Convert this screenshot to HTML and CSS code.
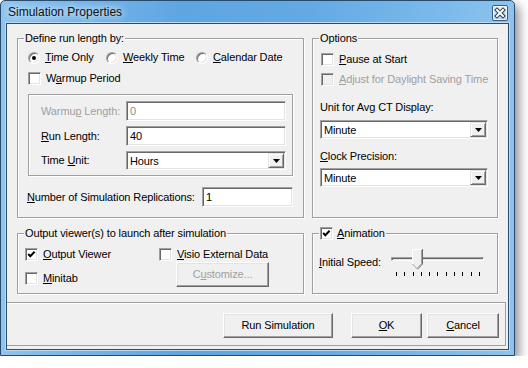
FILE: index.html
```html
<!DOCTYPE html>
<html>
<head>
<meta charset="utf-8">
<title>Simulation Properties</title>
<link rel="stylesheet" href="styles.css">
</head>
<body>
<div class="window">
  <div class="titlebar">
    <span class="title">Simulation Properties</span>
    <span class="close">
      <svg width="14" height="14" viewBox="0 0 14 14"><path d="M4 4 L10 10 M10 4 L4 10" stroke="#2b3f55" stroke-width="4" stroke-linecap="square"/><path d="M4 4 L10 10 M10 4 L4 10" stroke="#fff" stroke-width="2" stroke-linecap="square"/></svg>
    </span>
  </div>
  <div class="client">
    <div class="groups">
      <div class="group g-define">
        <span class="legend">Define run length by:</span>
        <div class="radios">
          <label class="opt"><span class="radio on"></span><span><u>T</u>ime Only</span></label>
          <label class="opt"><span class="radio"></span><span><u>W</u>eekly Time</span></label>
          <label class="opt"><span class="radio"></span><span><u>C</u>alendar Date</span></label>
        </div>
        <label class="opt warm"><span class="cb"></span><span>W<u>a</u>rmup Period</span></label>
        <div class="inner">
          <div class="field"><span class="lbl disabled">Warmu<u>p</u> Length:</span><span class="input dim">0</span></div>
          <div class="field"><span class="lbl"><u>R</u>un Length:</span><span class="input">40</span></div>
          <div class="field"><span class="lbl">Time <u>U</u>nit:</span><span class="select wide"><span class="val">Hours</span><span class="drop"><svg width="7" height="4" viewBox="0 0 7 4"><path d="M0 0H7L3.5 4Z" fill="#000"/></svg></span></span></div>
        </div>
        <div class="reps"><span class="lbl-reps"><u>N</u>umber of Simulation Replications:</span><span class="input small">1</span></div>
      </div>

      <div class="group g-options">
        <span class="legend">Options</span>
        <label class="opt pause"><span class="cb"></span><span><u>P</u>ause at Start</span></label>
        <label class="opt adjust disabled"><span class="cb off"></span><span><u>A</u>djust for Daylight Saving Time</span></label>
        <div class="olabel first">Unit for Avg CT Display:</div>
        <span class="select opt-sel"><span class="val">Minute</span><span class="drop"><svg width="7" height="4" viewBox="0 0 7 4"><path d="M0 0H7L3.5 4Z" fill="#000"/></svg></span></span>
        <div class="olabel second"><u>C</u>lock Precision:</div>
        <span class="select opt-sel sel2"><span class="val">Minute</span><span class="drop"><svg width="7" height="4" viewBox="0 0 7 4"><path d="M0 0H7L3.5 4Z" fill="#000"/></svg></span></span>
      </div>

      <div class="group g-output">
        <span class="legend">Output viewer(s) to launch after simulation</span>
        <div class="out-cols">
          <div class="col1">
            <label class="opt"><span class="cb"><svg width="11" height="11" viewBox="0 0 11 11"><path d="M2.2 5 L4.3 7.2 L8.6 2.8" fill="none" stroke="#000" stroke-width="2"/></svg></span><span><u>O</u>utput Viewer</span></label>
            <label class="opt minitab"><span class="cb"></span><span><u>M</u>initab</span></label>
          </div>
          <div class="col2">
            <label class="opt"><span class="cb"></span><span><u>V</u>isio External Data</span></label>
            <span class="btn custom disabled">C<u>u</u>stomize...</span>
          </div>
        </div>
      </div>

      <div class="group g-anim">
        <span class="legend anim-legend"><span class="cb"><svg width="11" height="11" viewBox="0 0 11 11"><path d="M2.2 5 L4.3 7.2 L8.6 2.8" fill="none" stroke="#000" stroke-width="2"/></svg></span><span><u>A</u>nimation</span></span>
        <div class="speed">
          <span class="speed-lbl"><u>I</u>nitial Speed:</span>
          <div class="slider">
            <div class="track"></div>
            <svg class="thumb" width="11" height="21" viewBox="0 0 11 21">
              <path d="M0 0H11V15L5.5 20.8L0 15Z" fill="#f0f0f0"/>
              <path d="M0.5 15V0.5H10" fill="none" stroke="#fff"/>
              <path d="M10.5 0V15L5.5 20.3" fill="none" stroke="#696969"/>
              <path d="M9.5 1V14.6L5.5 18.8" fill="none" stroke="#a0a0a0"/>
              <path d="M0.5 15L5.3 20" fill="none" stroke="#a0a0a0"/>
            </svg>
            <div class="ticks"><i></i><i></i><i></i><i></i><i></i><i></i><i></i><i></i><i></i><i></i><i></i></div>
          </div>
        </div>
      </div>
    </div>

    <div class="footer">
      <span class="btn run">Run Simulation</span>
      <span class="btn ok"><u>O</u>K</span>
      <span class="btn cancel"><u>C</u>ancel</span>
    </div>
  </div>
</div>
</body>
</html>
```
FILE: styles.css
```css
* { box-sizing: border-box; }
html, body { margin: 0; background: #fff; }
body {
  font-family: "Liberation Sans", Arial, sans-serif;
  font-size: 11px;
  line-height: 13px;
  letter-spacing: -0.12px;
  color: #000;
}
u { text-decoration: underline; text-underline-offset: 1px; }

.window {
  width: 515px;
  height: 356px;
  border: 1px solid #2a4a6b;
  border-radius: 5px 5px 0 0;
  background: linear-gradient(90deg, #8fc4ee 0%, #79b8ea 12%, #5ea6e2 35%, #63aae4 60%, #7ab9ea 85%, #8ec3ed 100%);
  box-shadow: 4px 5px 11px rgba(0, 0, 0, 0.45);
  padding: 0 5px 5px;
  display: flex;
  flex-direction: column;
}

.titlebar {
  height: 22px;
  display: flex;
  align-items: flex-start;
}
.title {
  padding-left: 2px;
  font-size: 12px;
  letter-spacing: 0;
  line-height: 22px;
  color: #111;
  text-shadow: 0 0 6px #e8f4ff, 0 0 10px rgba(255, 255, 255, 0.8);
}
.close {
  margin-left: auto;
  margin-top: 4px;
  margin-right: 1px;
  width: 16px;
  height: 16px;
  border: 1px solid #3c5c7e;
  border-radius: 2px;
  background: linear-gradient(#e6f0fa, #b6d2ec);
  box-shadow: inset 0 0 0 1px rgba(255, 255, 255, 0.7);
  display: flex;
  align-items: center;
  justify-content: center;
}

.client {
  height: 327px;
  background: #f0f0f0;
  border: 1px solid #2f4d6b;
  box-shadow: 0 0 0 1px #bcd9f3;
  padding: 14px 0 0 10px;
}

.groups {
  display: grid;
  grid-template-columns: 287px 186px;
  grid-template-rows: 180px 61px;
  gap: 15px 8px;
}
.group {
  position: relative;
  border: 1px solid #a0a0a0;
  box-shadow: inset 1px 1px 0 #fff, 1px 1px 0 #fff;
}
.legend {
  position: absolute;
  top: -7px;
  left: 6px;
  padding: 0 1px;
  background: #f0f0f0;
  white-space: nowrap;
  display: flex;
  align-items: center;
  gap: 4px;
}

.opt {
  display: flex;
  align-items: center;
  gap: 5px;
  height: 13px;
  white-space: nowrap;
}
.cb {
  width: 13px;
  height: 13px;
  flex: none;
  background: #fff;
  border: 1px solid;
  border-color: #a0a0a0 #fff #fff #a0a0a0;
  box-shadow: inset 1px 1px 0 #696969, inset -1px -1px 0 #e3e3e3;
  display: flex;
  align-items: center;
  justify-content: center;
}
.cb.off { background: #f0f0f0; }
.radio {
  width: 12px;
  height: 12px;
  flex: none;
  border-radius: 50%;
  background: #fff;
  border: 1px solid;
  border-color: #a0a0a0 #fff #fff #a0a0a0;
  box-shadow: inset 1px 1px 0 #696969, inset -1px -1px 0 #e3e3e3;
  position: relative;
}
.radio.on::after {
  content: "";
  position: absolute;
  left: 3px;
  top: 3px;
  width: 4px;
  height: 4px;
  border-radius: 50%;
  background: #000;
}
.disabled { color: #a0a0a0; }

/* Define group */
.radios {
  margin-top: 12px;
  padding-left: 10px;
  display: grid;
  grid-template-columns: 78px 90px auto;
}
.warm { margin-top: 8px; margin-left: 10px; }
.inner {
  margin: 9px 0 0 10px;
  width: 265px;
  height: 82px;
  border: 1px solid #a0a0a0;
  box-shadow: inset 1px 1px 0 #fff, 1px 1px 0 #fff;
  padding: 6px 0 0 12px;
  display: flex;
  flex-direction: column;
  gap: 5px;
}
.field { display: flex; align-items: center; }
.lbl { width: 85px; }
.input {
  width: 160px;
  height: 20px;
  background: #fff;
  border: 1px solid;
  border-color: #a0a0a0 #fff #fff #a0a0a0;
  box-shadow: inset 1px 1px 0 #696969, inset -1px -1px 0 #e3e3e3;
  padding: 3px 0 0 3px;
}
.input.dim { color: #8a8a8a; }
.select {
  display: flex;
  height: 19px;
  background: #fff;
  border: 1px solid;
  border-color: #a0a0a0 #fff #fff #a0a0a0;
  box-shadow: inset 1px 1px 0 #696969, inset -1px -1px 0 #e3e3e3;
  padding: 1px;
}
.select.wide { width: 160px; }
.select .val { flex: 1; padding: 2px 0 0 2px; }
.drop {
  width: 16px;
  height: 15px;
  flex: none;
  background: #f0f0f0;
  border: 1px solid;
  border-color: #e3e3e3 #696969 #696969 #e3e3e3;
  box-shadow: inset 1px 1px 0 #fff, inset -1px -1px 0 #a0a0a0;
  display: flex;
  align-items: center;
  justify-content: center;
}
.reps {
  margin-top: 11px;
  padding-left: 9px;
  display: flex;
  align-items: center;
}
.lbl-reps { width: 175px; white-space: nowrap; }
.input.small { width: 91px; }

/* Options group */
.g-options { display: flex; flex-direction: column; align-items: flex-start; }
.pause { margin-top: 14px; margin-left: 8px; }
.adjust { margin-top: 7px; margin-left: 8px; }
.olabel { margin-left: 7px; }
.olabel.first { margin-top: 15px; }
.olabel.second { margin-top: 11px; }
.opt-sel { width: 168px; margin-left: 7px; margin-top: 6px; }
.sel2 { margin-top: 5px; }

/* Output group */
.out-cols { display: flex; margin-top: 14px; }
.col1 { width: 141px; padding-left: 7px; }
.minitab { margin-top: 11px; }
.col2 { display: flex; flex-direction: column; align-items: flex-start; }
.btn {
  display: flex;
  align-items: center;
  justify-content: center;
  height: 25px;
  background: #f0f0f0;
  border: 1px solid;
  border-color: #fff #696969 #696969 #fff;
  box-shadow: inset -1px -1px 0 #a0a0a0, inset 1px 1px 0 #e3e3e3;
}
.custom { width: 93px; margin: 1px 0 0 17px; }

/* Animation group */
.anim-legend { gap: 4px; }
.speed { display: flex; margin-top: 14px; padding-left: 6px; }
.speed-lbl { width: 72px; margin-top: 8px; white-space: nowrap; }
.slider { position: relative; width: 93px; height: 29px; }
.track {
  margin-top: 9px;
  height: 4px;
  background: #e3e3e3;
  border: 1px solid;
  border-color: #a0a0a0 #fff #fff #a0a0a0;
  box-shadow: inset 1px 1px 0 #696969;
}
.thumb { position: absolute; left: 21px; top: 1px; }
.ticks {
  margin-top: 11px;
  display: flex;
  justify-content: space-between;
  padding: 0 4px 0 5px;
}
.ticks i { width: 1px; height: 4px; background: #000; }

/* Footer */
.footer {
  margin: 8px 2px 0 -10px;
  height: 44px;
  border-top: 1px solid #a0a0a0;
  border-right: 1px solid #a0a0a0;
  border-bottom: 1px solid #a0a0a0;
  box-shadow: inset 0 1px 0 #fff;
  display: flex;
  justify-content: flex-end;
  align-items: flex-start;
  padding: 10px 6px 0 0;
}
.run { width: 110px; }
.ok { width: 71px; margin-left: 18px; }
.cancel { width: 72px; margin-left: 5px; }
```
